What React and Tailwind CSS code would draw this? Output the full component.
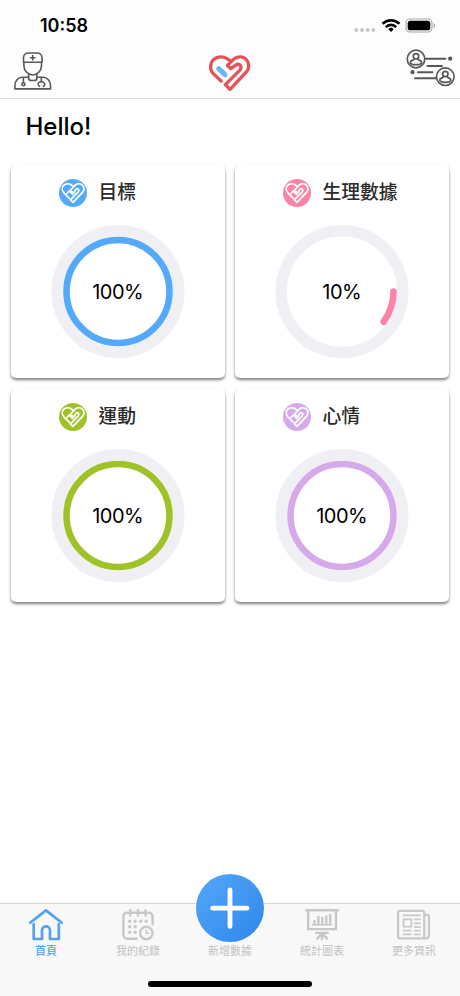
import React from "react";

const cards = [
    { id: 1, title: "目標", percent: 100, color: "#54a9fb" },
    { id: 2, title: "生理數據", percent: 10, color: "#fb83a6" },
    { id: 3, title: "運動", percent: 100, color: "#a0c229" },
    { id: 4, title: "心情", percent: 100, color: "#d6a9ea" },
];

const StatusBar = () => {
    return (
        <div className="flex h-[46px] items-center justify-between pt-[5px] pl-[40px] pr-[24px]">
            <span className="text-[18px] leading-none font-semibold text-black">10:58</span>
            <div className="flex items-center">
                <svg className="mt-[8px]" width="22" height="6" viewBox="0 0 22 6" fill="#c9c9cb">
                    <circle cx="2.4" cy="3" r="2" />
                    <circle cx="8" cy="3" r="2" />
                    <circle cx="13.7" cy="3" r="2" />
                    <circle cx="19.3" cy="3" r="2" />
                </svg>
                <svg className="ml-[5px]" width="20" height="15" viewBox="0 0 20 15" fill="none" stroke="#000" strokeWidth="2.7">
                    <path d="M1.6 5.8a11.8 11.8 0 0 1 16.8 0" />
                    <path d="M4.8 9.1a7.3 7.3 0 0 1 10.4 0" />
                    <path d="M10 14l-2.7-2.8a3.8 3.8 0 0 1 5.4 0z" fill="#000" stroke="none" />
                </svg>
                <svg className="ml-[4.5px]" width="31" height="15" viewBox="0 0 31 15">
                    <rect x="1" y="1" width="26" height="13" rx="4" fill="none" stroke="#a6a6a6" strokeWidth="1.1" />
                    <rect x="2.7" y="2.7" width="22.6" height="9.6" rx="2.6" fill="#000" />
                    <path d="M28.6 5.2v4.6c1-.4 1.5-1.2 1.5-2.3s-.5-1.9-1.5-2.3z" fill="#a6a6a6" />
                </svg>
            </div>
        </div>
    );
};

const DoctorIcon = () => (
    <svg width="38" height="38" viewBox="0 0 38 38" fill="none" stroke="#58585a" strokeWidth="1.6" strokeLinejoin="round" strokeLinecap="round">
        <path d="M9.5 10.2V5.6C9.5 2.8 11.8 1 14.4 1h8.6c2.8 0 5 1.8 5 4.6v4.6z" />
        <path d="M9.9 10.4v3.4c0 5 4.4 9.2 8.8 9.2s8.8-4.2 8.8-9.2v-3.4" />
        <path d="M18.7 3.6v4.4M16.5 5.8h4.4" />
        <path d="M14.6 22.3v3.6c0 1.6 1.3 2.6 2.8 2.6h2.8c1.5 0 2.7-1 2.7-2.6v-3.6" />
        <path d="M14.5 25.2H8.2C4 25.2 .9 29 .9 33.4v3.5h35.6v-3.5c0-4.4-3.1-8.2-7.3-8.2h-6.3" />
        <path d="M9.4 25.5v5.2M27.3 25.5v4.2" />
        <circle cx="9.4" cy="32.2" r="1.5" />
        <path d="M25.4 34.4c-2.3-1.3-1.5-4.7 1.9-4.7s4.4 3.4 2.1 4.7" />
    </svg>
);

const LogoIcon = () => (
    <svg width="42" height="38" viewBox="58 43 126 114" fill="none" strokeLinecap="round" strokeLinejoin="round">
        <path d="M94 124L70 101C60 91 60 71 71 60C84 49 101 50 112 57L121 63" stroke="#e4535b" strokeWidth="10" />
        <path d="M123 87L113 77L134 57C148 48 163 51 171 61C180 72 179 87 170 97L121 149L107 135L150 92C158 83 153 72 142 74L123 87" stroke="#e4535b" strokeWidth="10" />
        <path d="M87 87L106 105" stroke="#67b9f4" strokeWidth="15" />
    </svg>
);

const FriendsIcon = () => (
    <svg width="50" height="38" viewBox="0 0 50 38" fill="none" stroke="#58585a" strokeWidth="1.7" strokeLinecap="round">
        <circle cx="10" cy="10" r="8.8" />
        <circle cx="10" cy="7.3" r="2.7" />
        <path d="M8.6 9.7c-.3 1.6-4.2 1.4-4.2 3.7 0 3 11.2 3 11.2 0 0-2.3-3.9-2.1-4.2-3.7" />
        <circle cx="39.3" cy="27.7" r="8.8" />
        <circle cx="39.3" cy="25" r="2.7" />
        <path d="M37.9 27.4c-.3 1.6-4.2 1.4-4.2 3.7 0 3 11.2 3 11.2 0 0-2.3-3.9-2.1-4.2-3.7" />
        <path d="M19.3 9.7h20M21.5 17h14.5M12 23.2h14.5M9 29.3h21" strokeWidth="2" />
        <circle cx="44.2" cy="9.7" r="1.3" fill="#58585a" />
        <circle cx="6.5" cy="23.2" r="1.3" fill="#58585a" />
    </svg>
);

const HeartBadge = ({ color }) => (
    <svg width="28" height="28" viewBox="0 0 28 28" fill="none">
        <circle cx="14" cy="14" r="14" fill={color} />
        <g stroke="#fff" strokeWidth="1.7" strokeLinecap="round" strokeLinejoin="round">
            <path d="M8 14.3l2.3-2.3 3.3 3.3M10.4 19.4L5 14.2C2.6 11.4 2.8 8 4.9 6.2c2.4-2.1 5.5-1.8 7.5-.2L14 7.4" />
            <path d="M14.6 14.4l-3-3.4 4.4-4.6c2.4-2.3 5.8-2.2 7.7.1 1.7 2.2 1.5 5-.4 7.2L14 23.4l-2.6-2.5 7.9-8.1c1.5-1.8-.4-4-2.3-2.7z" />
        </g>
    </svg>
);

const ProgressRing = ({ percent, color }) => {
    const radius = 51.5;
    const length = 2 * Math.PI * radius;

    return (
        <div className="grid h-[134px] w-[134px] place-items-center">
            <svg className="col-start-1 row-start-1" width="134" height="134" viewBox="0 0 134 134" fill="none">
                <circle cx="67" cy="66.5" r="60.8" stroke="#f0eff4" strokeWidth="11.4" />
                <circle cx="67" cy="66.5" r={radius} stroke={color} strokeWidth="6.6" strokeLinecap="round"
                    strokeDasharray={`${length * percent / 100} ${length}`} />
            </svg>
            <span className="col-start-1 row-start-1 pt-px text-[20px] leading-none tracking-[-0.5px] text-black">{percent}%</span>
        </div>
    );
};

const Card = ({ item }) => {
    return (
        <div className="flex h-[213.5px] flex-col items-center rounded-[5px] bg-white shadow-[0_2px_3px_rgba(0,0,0,0.5)]">
            <div className="flex h-[60px] w-full items-start pt-[14.5px] pl-[48px]">
                <HeartBadge color={item.color} />
                <span className="ml-[11.5px] pt-[0.5px] text-[18.8px] leading-[25px] font-medium text-[#2b2b2b]">{item.title}</span>
            </div>
            <ProgressRing percent={item.percent} color={item.color} />
        </div>
    );
};

const HomeIcon = () => (
    <svg width="36" height="34" viewBox="0 0 36 34" fill="none" stroke="#54a2ef" strokeWidth="2.7" strokeLinecap="round" strokeLinejoin="round">
        <path d="M2.2 14.7L18 2.4l15.8 12.3" />
        <path d="M5.7 16v15h8.3V22.4c0-5.3 8-5.3 8 0V31h8.8V16" />
    </svg>
);

const RecordIcon = () => (
    <svg width="36" height="34" viewBox="0 0 36 34" fill="none" stroke="#c8c8c8" strokeWidth="2.4" strokeLinecap="round">
        <path d="M16.5 30.7H7a3.6 3.6 0 0 1-3.6-3.6V8.3A3.6 3.6 0 0 1 7 4.7h22a3.6 3.6 0 0 1 3.6 3.6v8" />
        <path d="M10.3 2.2v5.3M18 2.2v5.3M25.6 2.2v5.3" />
        <g fill="#c8c8c8" stroke="none">
            <circle cx="9.7" cy="13.3" r="1.7" />
            <circle cx="15.2" cy="13.3" r="1.7" />
            <circle cx="20.7" cy="13.3" r="1.7" />
            <circle cx="26.2" cy="13.3" r="1.7" />
            <circle cx="9.7" cy="18.7" r="1.7" />
            <circle cx="15.2" cy="18.7" r="1.7" />
            <circle cx="9.7" cy="24.2" r="1.7" />
            <circle cx="15.2" cy="24.2" r="1.7" />
        </g>
        <circle cx="26.3" cy="25" r="6.2" />
        <path d="M26.3 22.2v3h2" strokeWidth="1.7" />
    </svg>
);

const ChartIcon = () => (
    <svg width="36" height="34" viewBox="0 0 36 34" fill="none" stroke="#c8c8c8" strokeWidth="2.4" strokeLinecap="round">
        <path d="M2.2 2.3h31.6" />
        <path d="M4.2 2.5v18.6h27.8V2.5" />
        <path d="M8.2 16.7h19.6" strokeWidth="1.6" />
        <path d="M10.5 16v-4M14.4 16V8M18.3 16v-7M22.3 16V7.5M26.2 16V6" strokeLinecap="butt" />
        <path d="M12.2 24.9h11.6M18 25.2l-4.7 5.4M18 25.2l5.3 5.4M18 25v6" />
    </svg>
);

const NewsIcon = () => (
    <svg width="36" height="34" viewBox="0 0 36 34" fill="none" stroke="#c8c8c8" strokeWidth="2.2" strokeLinejoin="round">
        <path d="M3.9 2.8h22.6c1 0 1.7.7 1.7 1.7v24.3c0 1 .8 1.5 1.7 1.5H3.9c-1 0-1.8-.8-1.8-1.8v-24c0-1 .8-1.7 1.8-1.7z" />
        <path d="M28.3 6.8h3c1 0 1.7.6 1.7 1.5v19.5c0 1.5-1 2.5-3 2.5" />
        <rect x="7.6" y="11.3" width="7.8" height="7.3" strokeWidth="1.8" />
        <path d="M6.7 7.3h18M18 11.4h6.7M18 15.3h6.7M18 19.1h6.7M6.7 22.6h8.8M18 22.6h6.7M6.7 26.3h8.8M18 26.3h6.7" strokeWidth="1.7" />
    </svg>
);

const AddButton = () => (
    <button className="-mt-[34.5px] flex h-[68px] w-[68px] shrink-0 items-center justify-center rounded-full bg-linear-to-br from-[#53a8fa] to-[#2f86ea]">
        <svg width="42" height="42" viewBox="0 0 42 42" stroke="#fff" strokeWidth="4.8" strokeLinecap="round">
            <path d="M21 2.8v36.6M3.6 21.2h34.4" />
        </svg>
    </button>
);

const tabs = [
    { id: 1, label: "首頁", icon: HomeIcon, active: true },
    { id: 2, label: "我的紀錄", icon: RecordIcon },
    { id: 3, label: "新增數據", center: true },
    { id: 4, label: "統計圖表", icon: ChartIcon },
    { id: 5, label: "更多資訊", icon: NewsIcon },
];

const TabBar = () => {
    return (
        <div className="flex h-[93px] flex-col items-center border-t border-[#d6d6d6] bg-[#f8f8f8]">
            <div className="grid h-[77px] w-full grid-cols-5">
                {tabs.map((tab) => (
                    <div key={tab.id} className="flex flex-col items-center">
                        <div className="flex h-[40px] flex-col items-center pt-[4px]">
                            {tab.center ? <AddButton /> : <tab.icon />}
                        </div>
                        <span className={tab.active
                            ? "text-[11px] leading-[15px] font-medium text-[#54a2ef]"
                            : "text-[11px] leading-[15px] text-[#c2c2c2]"}>
                            {tab.label}
                        </span>
                    </div>
                ))}
            </div>
            <div className="h-[5.5px] w-[164px] rounded-full bg-black"></div>
        </div>
    );
};

const App = () => {
    return (
        <div className="flex h-[996px] w-[460px] flex-col overflow-hidden bg-white font-['Inter','Noto_Sans_CJK_TC',sans-serif]">
            <div className="h-[99px] border-b border-[#dcdcdc] bg-[#fdfdfd]">
                <StatusBar />
                <div className="grid grid-cols-3 pt-[3px] pr-[4px] pl-[14px]">
                    <div className="pt-[2.5px]"><DoctorIcon /></div>
                    <div className="flex justify-center pt-[5px] pr-[9px]"><LogoIcon /></div>
                    <div className="flex justify-end"><FriendsIcon /></div>
                </div>
            </div>
            <h1 className="pt-[12px] pl-[25.5px] text-[24px] leading-[32px] font-medium text-black">Hello!</h1>
            <div className="grid grid-cols-2 gap-x-[10.5px] gap-y-[10.5px] pr-[11.5px] pl-[11px] pt-[21.5px]">
                {cards.map((item) => (
                    <Card key={item.id} item={item} />
                ))}
            </div>
            <div className="flex-1"></div>
            <TabBar />
        </div>
    );
};

export default App;
